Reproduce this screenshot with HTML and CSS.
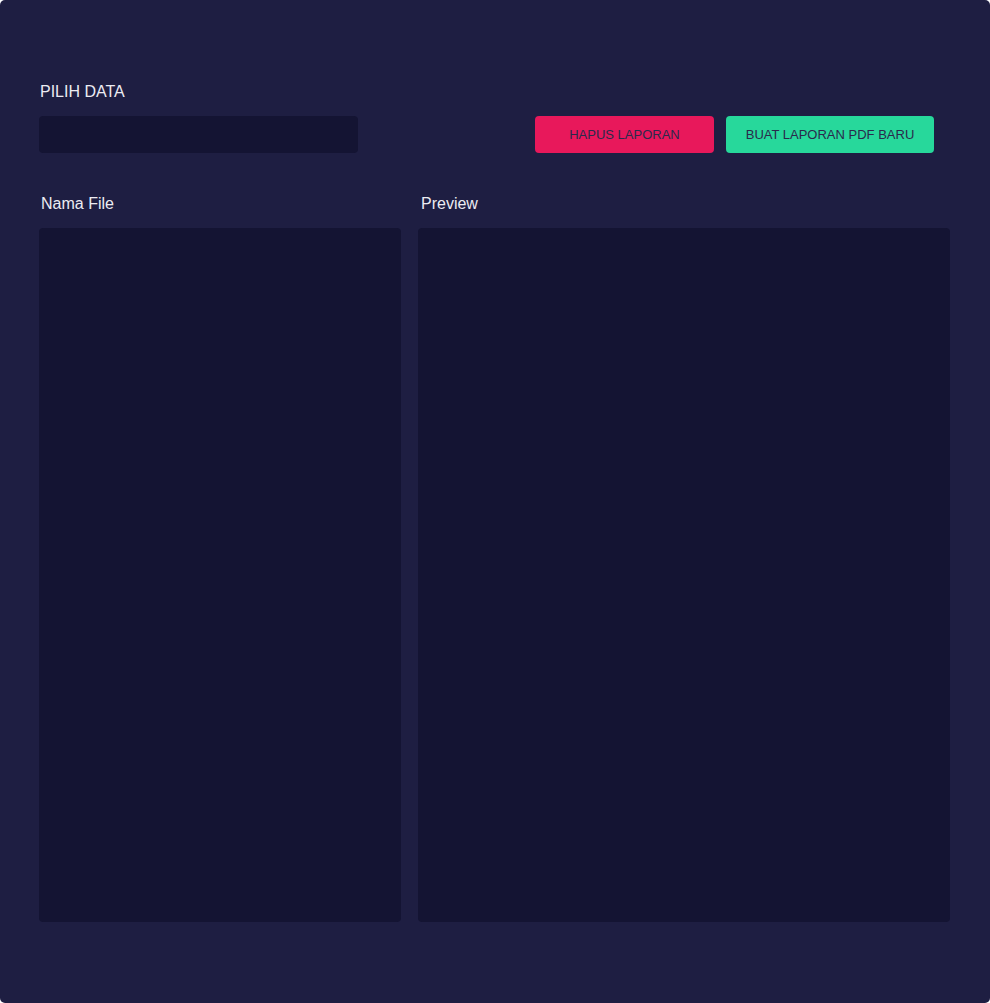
FILE: index.html
```html
<!DOCTYPE html>
<html lang="id">
<head>
<meta charset="utf-8">
<title>Laporan</title>
<link rel="stylesheet" href="styles.css">
</head>
<body>
<div class="app">
  <div class="top">
    <div class="picker">
      <div class="label">PILIH DATA</div>
      <div class="select"></div>
    </div>
    <div class="actions">
      <button class="btn btn-red">HAPUS LAPORAN</button>
      <button class="btn btn-green">BUAT LAPORAN PDF BARU</button>
    </div>
  </div>
  <div class="panels">
    <div class="col col-files">
      <div class="col-title">Nama File</div>
      <div class="panel"></div>
    </div>
    <div class="col col-preview">
      <div class="col-title">Preview</div>
      <div class="panel"></div>
    </div>
  </div>
</div>
</body>
</html>
```
FILE: styles.css
```css
html, body {
  margin: 0;
  padding: 0;
  background: #ffffff;
}
.app {
  box-sizing: border-box;
  width: 990px;
  height: 1003px;
  background: #1e1e42;
  border-radius: 5px;
  padding: 83px 40px 0 39px;
  font-family: "Liberation Sans", Arial, sans-serif;
  color: #ececf2;
}
.top {
  display: flex;
  align-items: flex-end;
}
.picker {
  width: 319px;
}
.label {
  font-size: 16px;
  line-height: 18px;
  margin-left: 1px;
  margin-bottom: 15px;
}
.select {
  height: 37px;
  background: #141433;
  border-radius: 4px;
}
.actions {
  display: flex;
  gap: 12px;
  margin-left: auto;
  margin-right: 16px;
}
.btn {
  height: 37px;
  border: none;
  border-radius: 4px;
  font-family: "Liberation Sans", Arial, sans-serif;
  font-size: 13px;
  color: #2a2a4c;
  padding: 0;
  cursor: pointer;
}
.btn-red {
  width: 179px;
  background: #e8185b;
}
.btn-green {
  width: 208px;
  background: #27d89b;
}
.panels {
  display: flex;
  gap: 17px;
  margin-top: 42px;
}
.col-files {
  width: 362px;
}
.col-preview {
  flex: 1;
}
.col-title {
  font-size: 16px;
  line-height: 18px;
  margin-bottom: 15px;
  padding-left: 2px;
}
.col-preview .col-title {
  padding-left: 3px;
}
.panel {
  height: 694px;
  background: #141433;
  border-radius: 4px;
}
```
